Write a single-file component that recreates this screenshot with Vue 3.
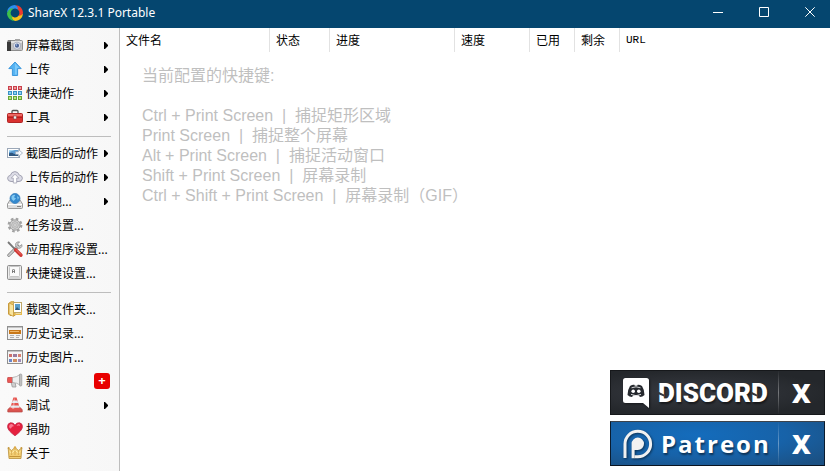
<script setup>
const columns = [
  { label: '文件名', width: 150 },
  { label: '状态', width: 60 },
  { label: '进度', width: 125 },
  { label: '速度', width: 75 },
  { label: '已用', width: 45 },
  { label: '剩余', width: 45 },
  { label: 'URL', width: null },
]

const hotkeys = [
  { keys: 'Ctrl + Print Screen', task: '捕捉矩形区域' },
  { keys: 'Print Screen', task: '捕捉整个屏幕' },
  { keys: 'Alt + Print Screen', task: '捕捉活动窗口' },
  { keys: 'Shift + Print Screen', task: '屏幕录制' },
  { keys: 'Ctrl + Shift + Print Screen', task: '屏幕录制（GIF）' },
]

const groups = [
  [
    { icon: 'camera', label: '屏幕截图', menu: true },
    { icon: 'upload', label: '上传', menu: true },
    { icon: 'grid', label: '快捷动作', menu: true },
    { icon: 'toolbox', label: '工具', menu: true },
  ],
  [
    { icon: 'imageExport', label: '截图后的动作', menu: true },
    { icon: 'cloud', label: '上传后的动作', menu: true },
    { icon: 'drive', label: '目的地...', menu: true },
    { icon: 'gear', label: '任务设置...' },
    { icon: 'wrench', label: '应用程序设置...' },
    { icon: 'keyboard', label: '快捷键设置...' },
  ],
  [
    { icon: 'folder', label: '截图文件夹...' },
    { icon: 'blog', label: '历史记录...' },
    { icon: 'gallery', label: '历史图片...' },
    { icon: 'megaphone', label: '新闻', badge: '+' },
    { icon: 'cone', label: '调试', menu: true },
    { icon: 'heart', label: '捐助' },
    { icon: 'crown', label: '关于' },
  ],
]

const icons = {
  camera: `
    <rect x="0.5" y="3.5" width="15" height="10" rx="1" fill="#c4c4c4" stroke="#8d8d8d"/>
    <rect x="8" y="2" width="5" height="2" fill="#a5a5a5"/>
    <rect x="0" y="5" width="4" height="9" fill="#3a3a3a"/>
    <rect x="1" y="3" width="3" height="2" fill="#777"/>
    <rect x="4" y="4" width="11" height="2" fill="#e2e2e2"/>
    <circle cx="10" cy="8.7" r="3.6" fill="#e6e8ef" stroke="#9aa1b2" stroke-width=".8"/>
    <circle cx="10" cy="8.7" r="2.1" fill="#4b6397"/>
    <circle cx="9.4" cy="8" r="0.8" fill="#a5bde9"/>`,
  upload: `
    <path d="M8 1 14.2 7.6H10.6V14.5H5.4V7.6H1.8Z" fill="#56b3f2" stroke="#3d98dc" stroke-linejoin="round"/>
    <path d="M8 2.2 12 6.9H9.8V13.6H8Z" fill="#7ccafa"/>`,
  grid: `
    <g fill="#f09a9a" stroke="#c9404c"><rect x="1.5" y="1.5" width="3" height="3"/><rect x="6.5" y="1.5" width="3" height="3"/><rect x="11.5" y="1.5" width="3" height="3"/></g>
    <g fill="#8bd3f3" stroke="#3a92c4"><rect x="1.5" y="6.5" width="3" height="3"/><rect x="6.5" y="6.5" width="3" height="3"/><rect x="11.5" y="6.5" width="3" height="3"/></g>
    <g fill="#b6e583" stroke="#68a638"><rect x="1.5" y="11.5" width="3" height="3"/><rect x="6.5" y="11.5" width="3" height="3"/><rect x="11.5" y="11.5" width="3" height="3"/></g>`,
  toolbox: `
    <path d="M5 4.5V2.5Q5 1.5 6 1.5H10Q11 1.5 11 2.5V4.5" fill="none" stroke="#555" stroke-width="1.3"/>
    <rect x="0.5" y="4.5" width="15" height="9" rx="1" fill="#d9312f" stroke="#b02525"/>
    <rect x="1" y="5" width="14" height="2" fill="#ee6a65"/>
    <rect x="1" y="8" width="14" height="1" fill="#b02122"/>
    <rect x="6.5" y="7" width="3" height="3" fill="#eee" stroke="#8a3a3a" stroke-width=".6"/>`,
  imageExport: `
    <rect x="0.5" y="3.5" width="12" height="9" fill="#fff" stroke="#9ba7b7"/>
    <rect x="2" y="5" width="9" height="6" fill="#5c9cd2"/>
    <path d="M2 8.5Q5 7 7 9L11 8.5V11H2Z" fill="#2d5680"/>
    <path d="M2 5H8L2 7Z" fill="#a5d6f2"/>
    <path d="M8.5 6.8H11.5V4.6L15.5 8 11.5 11.5V9.3H8.5Z" fill="#f8fbff" stroke="#9aa9ba" stroke-width=".8"/>`,
  cloud: `
    <path d="M4 12.5Q0.6 12.3 0.6 9.2 0.8 6.7 3.4 6.3 4.2 2.8 7.9 2.6 11.2 2.7 12.2 6 15.4 6.5 15.4 9.3 15 12.5 12 12.5Z" fill="#dcdce6" stroke="#a2a2b2"/>
    <path d="M8 5.2 11.8 9.1H9.7V14H6.3V9.1H4.2Z" fill="#fff" stroke="#a2a2b2" stroke-width=".8"/>`,
  drive: `
    <path d="M3 7H13L15.5 11V14.5Q15.5 15.5 14.5 15.5H1.5Q.5 15.5 .5 14.5V11Z" fill="#dedede" stroke="#9a9a9a"/>
    <path d="M1 11.5H15" stroke="#fff"/><rect x="10" y="13" width="4" height="1" fill="#858585"/>
    <circle cx="8" cy="5.5" r="5" fill="#3489ce" stroke="#3a7fbb" stroke-width=".8"/>
    <path d="M4.5 3.5Q6 1 8.3 2L7 4.2 9 5.5 6.6 8 4.5 6ZM10 3 12 4.4 10.8 7Z" fill="#82c9f1"/>`,
  gear: `
    <circle cx="8" cy="8" r="6.3" fill="none" stroke="#a2a2a2" stroke-width="2.2" stroke-dasharray="2.6 2.35"/>
    <circle cx="8" cy="8" r="5.2" fill="#d2d2d2" stroke="#a2a2a2"/>
    <circle cx="8" cy="8" r="3.2" fill="#ededed" stroke="#a5a5a5" stroke-width=".8"/>
    <path d="M8 3V13M3 8H13M4.6 4.6 11.4 11.4M11.4 4.6 4.6 11.4" stroke="#b0b0b0" stroke-width=".6"/>
    <circle cx="8" cy="8" r="1.3" fill="#fafafa" stroke="#959595" stroke-width=".7"/>`,
  wrench: `
    <path d="M1.8 14.3 10.8 5.2" stroke="#777" stroke-width="3" stroke-linecap="round"/>
    <path d="M1.8 14.3 10.8 5.2" stroke="#ccc" stroke-width="1.7" stroke-linecap="round"/>
    <path d="M14.8 3.6 12.8 5.2 10.9 4.8 10.8 2.8 12.6.9Q9.7.3 8.7 2.7 8.4 5 9.6 6.4 11.5 8 13.8 6.8 15.6 5.5 14.8 3.6Z" fill="#d5d5d5" stroke="#878787" stroke-width=".8"/>
    <path d="M1 1 8.6 8.8" stroke="#777" stroke-width="1.8"/>
    <path d="M8.8 9 13.8 14.1" stroke="#d03a36" stroke-width="3.6" stroke-linecap="round"/>
    <path d="M9.3 8.9 13.6 13.2" stroke="#f37870" stroke-linecap="round"/>`,
  keyboard: `
    <rect x="0.5" y="0.5" width="14" height="14" rx="1.2" fill="#d3d3d3" stroke="#8f8f8f"/>
    <path d="M1 1 3 2.5V11L1 14ZM14 1 12 2.5V11L14 14Z" fill="#efefef"/>
    <rect x="2.5" y="1.5" width="10" height="10" rx="1" fill="#fafafa" stroke="#c5c5c5"/>
    <path d="M5.5 8V5L6.5 4 7.5 5V8M5.5 6.5H7.5" fill="none" stroke="#666" stroke-width=".8"/>`,
  folder: `
    <path d="M1.5 2.5 4 .8H7L8 2V14.5H3L1.5 13Z" fill="#edc765" stroke="#c79a3c"/>
    <rect x="6.5" y="1.5" width="8" height="10" fill="#fff" stroke="#bfa768"/>
    <rect x="8" y="3" width="5" height="6" fill="#5b9fcb"/><path d="M8 9 10 6 13 9Z" fill="#345c7b"/>
    <path d="M2 2 6.5 4V15.5L2 13Z" fill="#f9e49c" stroke="#c99b3d" stroke-width=".8"/>
    <path d="M7 12.5H14V9.5H15V14H7Z" fill="#e7bb4c"/>`,
  blog: `
    <rect x="0.5" y="1.5" width="15" height="13" fill="#f1f1f1" stroke="#8f8f8f"/>
    <path d="M1 2.5H15" stroke="#c4c4c4"/>
    <rect x="2" y="5" width="12" height="4" fill="#c87718"/>
    <path d="M3 6.5H12" stroke="#f0b76a"/>
    <path d="M3 10.5H7M3 12.5H7M9 10.5H13M9 12.5H12" stroke="#b0b0b0"/>`,
  gallery: `
    <rect x="0.5" y="1.5" width="15" height="13" fill="#f5f5f5" stroke="#8f8f8f"/>
    <path d="M1 2.5H15" stroke="#c4c4c4"/>
    <rect x="2" y="5" width="3" height="3" fill="#cf6f68"/><rect x="6" y="5" width="4" height="3" fill="#9a7a9c"/><rect x="11" y="5" width="3" height="3" fill="#d9826f"/>
    <rect x="2" y="10" width="3" height="3" fill="#6b87c9"/><rect x="6" y="10" width="4" height="3" fill="#d08d5e"/><rect x="11" y="10" width="3" height="3" fill="#a08cba"/>`,
  megaphone: `
    <path d="M4 9H8L9 14H5.3Z" fill="#cfcfcf" stroke="#999" stroke-width=".8"/>
    <path d="M.8 4.5Q0 7 .8 9.5H6V4.5Z" fill="#ea5754" stroke="#c94a4a" stroke-width=".8"/>
    <path d="M5.5 4.5Q10 4 13 1.5V12Q10 9.7 5.5 9.5Z" fill="#eeeeee" stroke="#a8a8a8" stroke-width=".8"/>
    <rect x="12.5" y="1" width="2.3" height="12" rx="1" fill="#c0c0c0" stroke="#999" stroke-width=".7"/>`,
  cone: `
    <path d="M.8 12.5 3 10.5H13L15.2 12.5V15H.8Z" fill="#d9534f" stroke="#b54542" stroke-width=".7"/>
    <path d="M6.4.6H9.6L13.2 12.5Q8 14 2.8 12.5Z" fill="#e65550"/>
    <path d="M5.7 3.5H10.4L11.2 6H4.9ZM4.2 8.5H11.8L12.6 10.8H3.4Z" fill="#e3e8ee"/>
    <path d="M7 1.5H8L7.2 12H5Z" fill="#fff" opacity=".35"/>`,
  heart: `
    <path d="M8 14.8Q1 9.7.6 6.2.2 2.7 3.3 1.8 6.5 1.3 8 4.2 9.5 1.3 12.7 1.8 15.8 2.7 15.4 6.2 15 9.7 8 14.8Z" fill="#e5213e" stroke="#c22a48" stroke-width=".8"/>
    <path d="M2 5.8Q2.2 2.8 4.5 3 6.2 3.4 7 5.3 5 4.8 4 7.5 2.6 8 2 5.8ZM9.5 5Q10.5 2.7 12.5 3.2L13 5Q11.2 4 9.5 5Z" fill="#fa7790"/>`,
  crown: `
    <path d="M1.2 3 4.6 5.5 8 2.4 11.4 5.5 14.8 3 14 13.5H2Z" fill="#f2cd72" stroke="#b98f3a" stroke-width=".8" stroke-linejoin="round"/>
    <path d="M2.3 11.5H13.7" stroke="#c4953a"/><path d="M3 6.5 4.5 8.2 8 5 11.5 8.2 13 6.5" fill="none" stroke="#fff0b0"/>
    <path d="M4.6 6V10M11.4 6V10M8 4V10" stroke="#cf9d40" stroke-width=".7"/>
    <circle cx="8" cy="2.5" r="1.2" fill="#dba848"/><circle cx="1.6" cy="3" r="1" fill="#c5973b"/><circle cx="14.4" cy="3" r="1" fill="#c5973b"/>`,
}
</script>

<template>
  <div class="window">
    <header class="titlebar">
      <svg class="logo" viewBox="0 0 16 16" aria-hidden="true">
        <path d="M8 0C3 0 0 4 .2 7.5Q1.5 4.8 4.5 5.2 5.5 3.4 8.5 3.6 11 4 12.8 6.5 13.4 2 8 0Z" fill="#2c8df0" />
        <path d="M16 8C16 3 12 0 8.5.2Q11.2 1.5 10.8 4.5 12.6 5.5 12.4 8.5 12 11 9.5 12.8 14 13.4 16 8Z" fill="#ee3a2e" />
        <path d="M8 16C13 16 16 12 15.8 8.5Q14.5 11.2 11.5 10.8 10.5 12.6 7.5 12.4 5 12 3.2 9.5 2.6 14 8 16Z" fill="#f9c21a" />
        <path d="M0 8C0 13 4 16 7.5 15.8Q4.8 14.5 5.2 11.5 3.4 10.5 3.6 7.5 4 5 6.5 3.2 2 2.6 0 8Z" fill="#3fc14a" />
      </svg>
      <h1>ShareX 12.3.1 Portable</h1>
      <div class="controls">
        <button type="button" aria-label="最小化">
          <svg viewBox="0 0 10 10"><path d="M0 5.5H10" /></svg>
        </button>
        <button type="button" aria-label="最大化">
          <svg viewBox="0 0 10 10"><path d="M.5.5H9.5V9.5H.5Z" /></svg>
        </button>
        <button type="button" aria-label="关闭">
          <svg viewBox="0 0 10 10"><path d="M.3.3 9.7 9.7M9.7.3.3 9.7" /></svg>
        </button>
      </div>
    </header>

    <div class="body">
      <nav class="sidebar">
        <ul v-for="(group, g) in groups" :key="g" class="group">
          <li v-for="item in group" :key="item.label">
            <button type="button" class="item">
              <svg class="icon" viewBox="0 0 16 16" aria-hidden="true" v-html="icons[item.icon]"></svg>
              <span class="label">{{ item.label }}</span>
              <svg v-if="item.menu" class="arrow" viewBox="0 0 4 7" aria-hidden="true">
                <path d="M0 0H1L4 3V4L1 7H0Z" />
              </svg>
              <span v-if="item.badge" class="badge">{{ item.badge }}</span>
            </button>
          </li>
        </ul>
      </nav>

      <main class="content">
        <table class="tasks">
          <colgroup>
            <col v-for="c in columns" :key="c.label" :style="c.width ? { width: c.width + 'px' } : null" />
          </colgroup>
          <thead>
            <tr>
              <th v-for="c in columns" :key="c.label" scope="col">{{ c.label }}</th>
            </tr>
          </thead>
        </table>

        <section class="hotkeys">
          <p>当前配置的快捷键:</p>
          <ul>
            <li v-for="h in hotkeys" :key="h.keys">{{ h.keys + '  |  ' + h.task }}</li>
          </ul>
        </section>

        <aside class="banners">
          <div class="banner discord">
            <a href="#discord">
              <svg viewBox="0 0 26 30" aria-hidden="true">
                <path d="M2.5 0H23.5Q26 0 26 2.5V30L20 25H2.5Q0 25 0 22.5V2.5Q0 0 2.5 0Z" fill="#fff" />
                <path d="M7 8Q9.5 6.5 11.3 6.8L11.8 7.7H14.2L14.7 6.8Q16.5 6.5 19 8 21.7 12.3 21.5 17 19.5 19 17 19L15.8 17.5H10.2L9 19Q6.5 19 4.5 17 4.3 12.3 7 8Z" fill="#26292e" />
                <circle cx="10.2" cy="13.3" r="1.8" fill="#fff" />
                <circle cx="15.8" cy="13.3" r="1.8" fill="#fff" />
                <path d="M8 16.4Q13 19 18 16.4M8.5 9.8Q13 7.8 17.5 9.8" fill="none" stroke="#fff" stroke-width=".8" />
              </svg>
              <span><b>D</b>ISCOR<b>D</b></span>
            </a>
            <button type="button">X</button>
          </div>
          <div class="banner patreon">
            <a href="#patreon">
              <svg viewBox="0 0 30 30" aria-hidden="true">
                <path d="M2 29V15A12.8 12.8 0 1 1 14.8 27.8H11.5" fill="none" stroke="#f1f1f1" stroke-width="3" />
                <path d="M8.6 29.3V14.8A6.2 6.2 0 1 1 14.8 21H11.6V29.3Z" fill="#f1f1f1" />
              </svg>
              <span>Patreon</span>
            </a>
            <button type="button">X</button>
          </div>
        </aside>
      </main>
    </div>
  </div>
</template>

<style>
body {
  margin: 0;
}
</style>

<style scoped>
.window {
  display: flex;
  flex-direction: column;
  min-height: 100vh;
  background: #fff;
  color: #000;
  font: 12px/16px "Noto Sans", "Noto Sans CJK SC", sans-serif;
}

button {
  margin: 0;
  padding: 0;
  border: 0;
  background: none;
  color: inherit;
  font: inherit;
}

ul {
  margin: 0;
  padding: 0;
  list-style: none;
}

.titlebar {
  display: flex;
  align-items: center;
  height: 28px;
  padding-left: 7px;
  background: #05466f;
  color: #fff;
}

.logo {
  width: 16px;
  height: 16px;
  margin: 0 5px 2px 0;
}

.titlebar h1 {
  flex: 1;
  margin: 0;
  padding-bottom: 2px;
  font-size: 12px;
  font-weight: 400;
}

.controls {
  display: flex;
  gap: 6px;
}

.controls button {
  display: grid;
  place-items: center;
  width: 40px;
  height: 28px;
  padding-bottom: 4px;
}

.controls svg {
  width: 10px;
  height: 10px;
  fill: none;
  stroke: #fff;
}

.body {
  display: flex;
  flex: 1;
}

.sidebar {
  box-sizing: border-box;
  width: 120px;
  padding: 5px 8px 5px 7px;
  border-right: 1px solid #bdbdbd;
  background: linear-gradient(90deg, #fafafa, #f7f7f7);
}

.group + .group::before {
  content: "";
  display: block;
  height: 1px;
  margin: 7px 0 3px;
  border-top: 1px solid #bdbdbd;
}

.item {
  display: flex;
  align-items: center;
  gap: 3px;
  width: 100%;
  height: 24px;
  text-align: left;
  white-space: nowrap;
}

.icon {
  flex: none;
  width: 16px;
  height: 16px;
}

.label {
  flex: 1;
  min-width: 0;
  padding-top: 2px;
}

.arrow {
  flex: none;
  width: 4px;
  height: 7px;
  margin-right: 3px;
}

.badge {
  width: 16px;
  height: 16px;
  margin-right: 1px;
  border-radius: 3px;
  background: #e80000;
  color: #fff;
  font: 700 13px/15px "Open Sans", sans-serif;
  text-align: center;
}

.content {
  display: flex;
  flex: 1;
  flex-direction: column;
  min-width: 0;
}

.tasks {
  width: 100%;
  border-spacing: 0;
  table-layout: fixed;
}

.tasks th {
  box-sizing: border-box;
  height: 24px;
  padding: 0 0 0 6px;
  border-right: 1px solid #e2e2e2;
  font: 400 12px/16px "Noto Sans CJK SC", sans-serif;
  text-align: left;
}

.tasks th:last-child {
  border-right: 0;
  font: 400 11px/16px "Liberation Mono", monospace;
}

.hotkeys {
  padding: 14px 22px;
  color: #bfbfbf;
  font: 400 16px/20px "Liberation Sans", "Noto Sans CJK SC", sans-serif;
  white-space: pre-wrap;
}

.hotkeys p {
  margin: 0 0 20px;
}

.banners {
  display: flex;
  flex-direction: column;
  align-self: flex-end;
  gap: 6px;
  width: 215px;
  margin-top: auto;
  padding: 0 5px 5px 0;
}

.banner {
  box-sizing: border-box;
  display: flex;
  height: 45px;
  border: 1px solid #16181b;
  color: #fff;
  text-shadow: 1px 2px 2px rgba(0, 0, 0, 0.5);
}

.banner a {
  display: flex;
  flex: 1;
  align-items: center;
  gap: 8px;
  padding-left: 12px;
  color: inherit;
  text-decoration: none;
}

.banner svg {
  flex: none;
  filter: drop-shadow(1px 1px 1px rgba(0, 0, 0, 0.5));
}

.banner button {
  width: 46px;
  border-left: 1px solid;
  border-image: linear-gradient(transparent, rgba(255, 255, 255, 0.35), transparent) 1;
  font: 800 26px/36px "Open Sans", sans-serif;
}

.discord {
  background: radial-gradient(ellipse at 40% 50%, #383b42, #24272b 75%);
}

.discord svg {
  width: 26px;
  height: 30px;
}

.discord a {
  gap: 9px;
}

.discord span {
  font: 900 26px/36px Roboto, sans-serif;
}

.discord b {
  position: relative;
  font-weight: inherit;
}

/* diagonal cut through the stem of each D */
.discord b::after {
  content: "";
  position: absolute;
  top: 14px;
  left: 0;
  width: 6px;
  height: 5px;
  background: #33363c;
  clip-path: polygon(0 0, 100% 60%, 100% 100%, 0 50%);
}

.patreon {
  border-color: #3d434b #0a1c2f #0a1420;
  background: radial-gradient(ellipse at 40% 30%, #146cbc, #1762a8 50%, #1b5184 90%);
}

.patreon svg {
  width: 30px;
  height: 30px;
}

.patreon span {
  font: 700 24px/36px "Open Sans", sans-serif;
  letter-spacing: 2px;
}
</style>
